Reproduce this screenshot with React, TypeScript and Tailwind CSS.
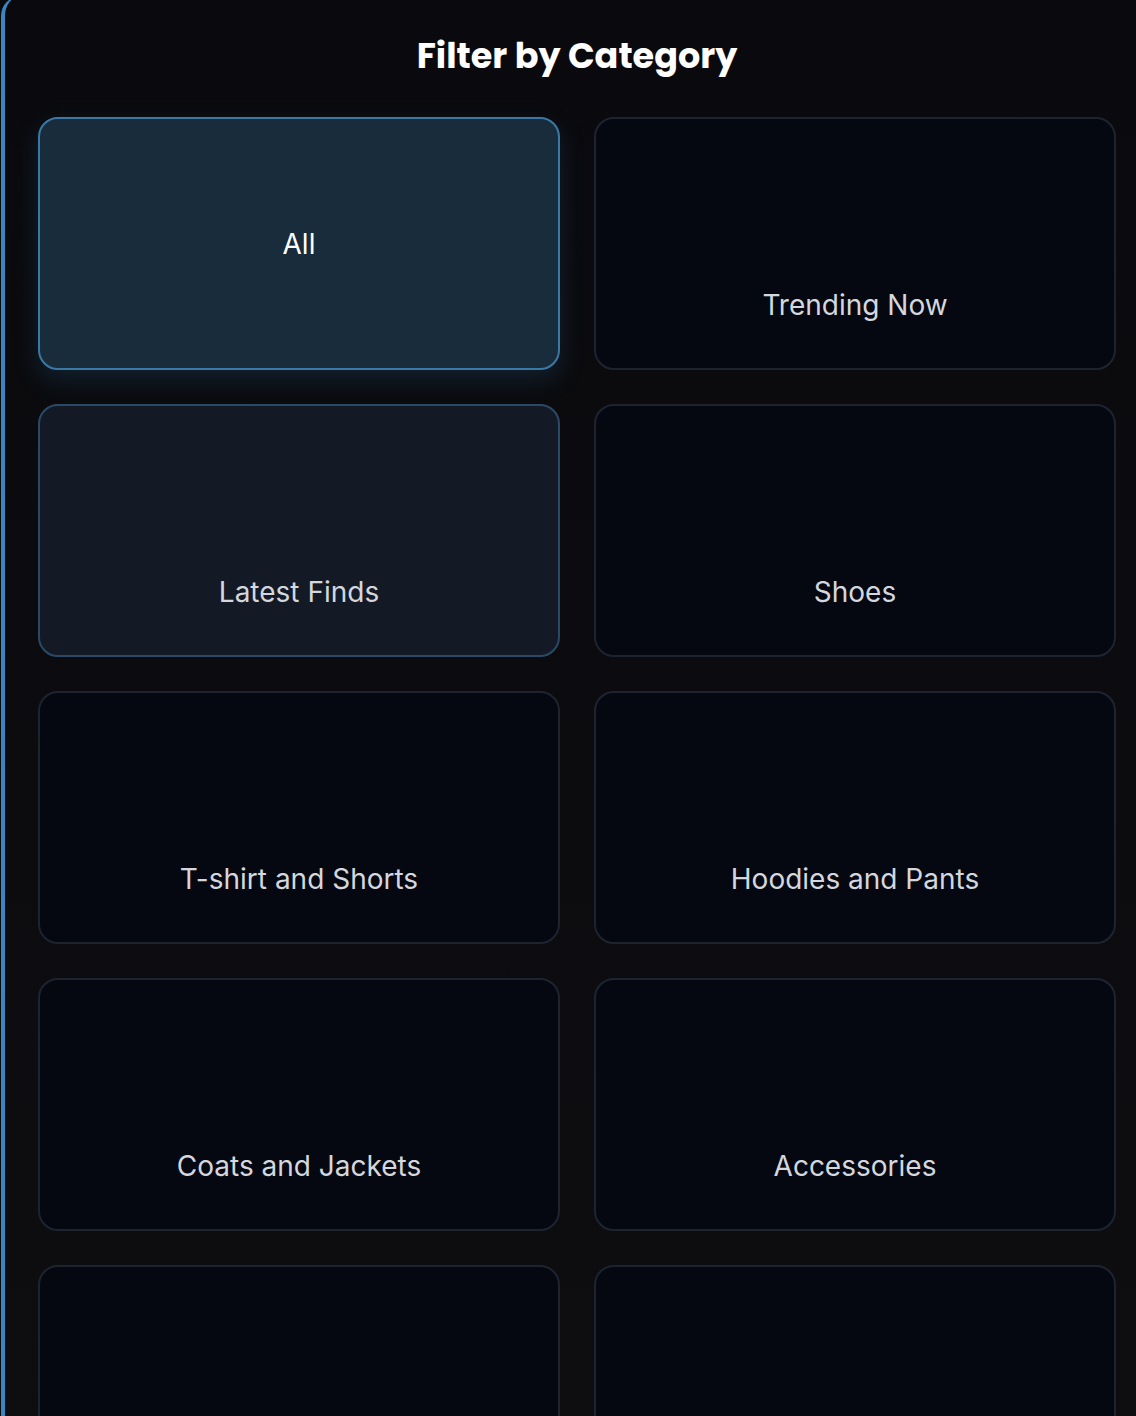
import React from 'react';

type Category = {
    label: string;
    variant: 'active' | 'hover' | 'idle';
};

const categories: Category[] = [
    { label: 'All', variant: 'active' },
    { label: 'Trending Now', variant: 'idle' },
    { label: 'Latest Finds', variant: 'hover' },
    { label: 'Shoes', variant: 'idle' },
    { label: 'T-shirt and Shorts', variant: 'idle' },
    { label: 'Hoodies and Pants', variant: 'idle' },
    { label: 'Coats and Jackets', variant: 'idle' },
    { label: 'Accessories', variant: 'idle' },
    { label: '', variant: 'idle' },
    { label: '', variant: 'idle' },
];

const CategoryCard = ({ label, variant }: Category) => {
    if (variant === 'active') {
        return (
            <button className="h-[253px] rounded-[20px] border-2 border-[#3a79a6] bg-[#182c3b] shadow-[0_10px_24px_rgba(40,110,160,0.22)] flex items-center justify-center text-white text-[28px] font-[Inter,sans-serif]">
                {label}
            </button>
        );
    }
    const tone =
        variant === 'hover'
            ? 'border-[#294a66] bg-[#131a26]'
            : 'border-[#1d2430] bg-[#050811]';
    return (
        <button
            className={`h-[253px] rounded-[20px] border-2 ${tone} flex flex-col items-center justify-end pb-[44px] text-[#d4d7dd] text-[28px] leading-[38px] font-[Inter,sans-serif]`}
        >
            {label}
        </button>
    );
};

export default function App() {
    return (
        <div className="w-[1136px] h-[1416px] overflow-hidden bg-[#0b0b0e]">
            <div className="w-[1148px] min-h-[1440px] ml-px -mt-[4px] rounded-tl-[20px] border-l-4 border-[#3a86c0] bg-gradient-to-b from-[#0a0a0e] to-[#0e0e11] px-[33px] pt-[36px]">
                <h2 className="text-center text-white text-[35px] leading-[48px] font-bold font-['Poppins','Inter',sans-serif]">
                    Filter by Category
                </h2>
                <div className="mt-[37px] grid grid-cols-2 gap-[34px]">
                    {categories.map((c, i) => (
                        <CategoryCard key={i} {...c} />
                    ))}
                </div>
            </div>
        </div>
    );
}
